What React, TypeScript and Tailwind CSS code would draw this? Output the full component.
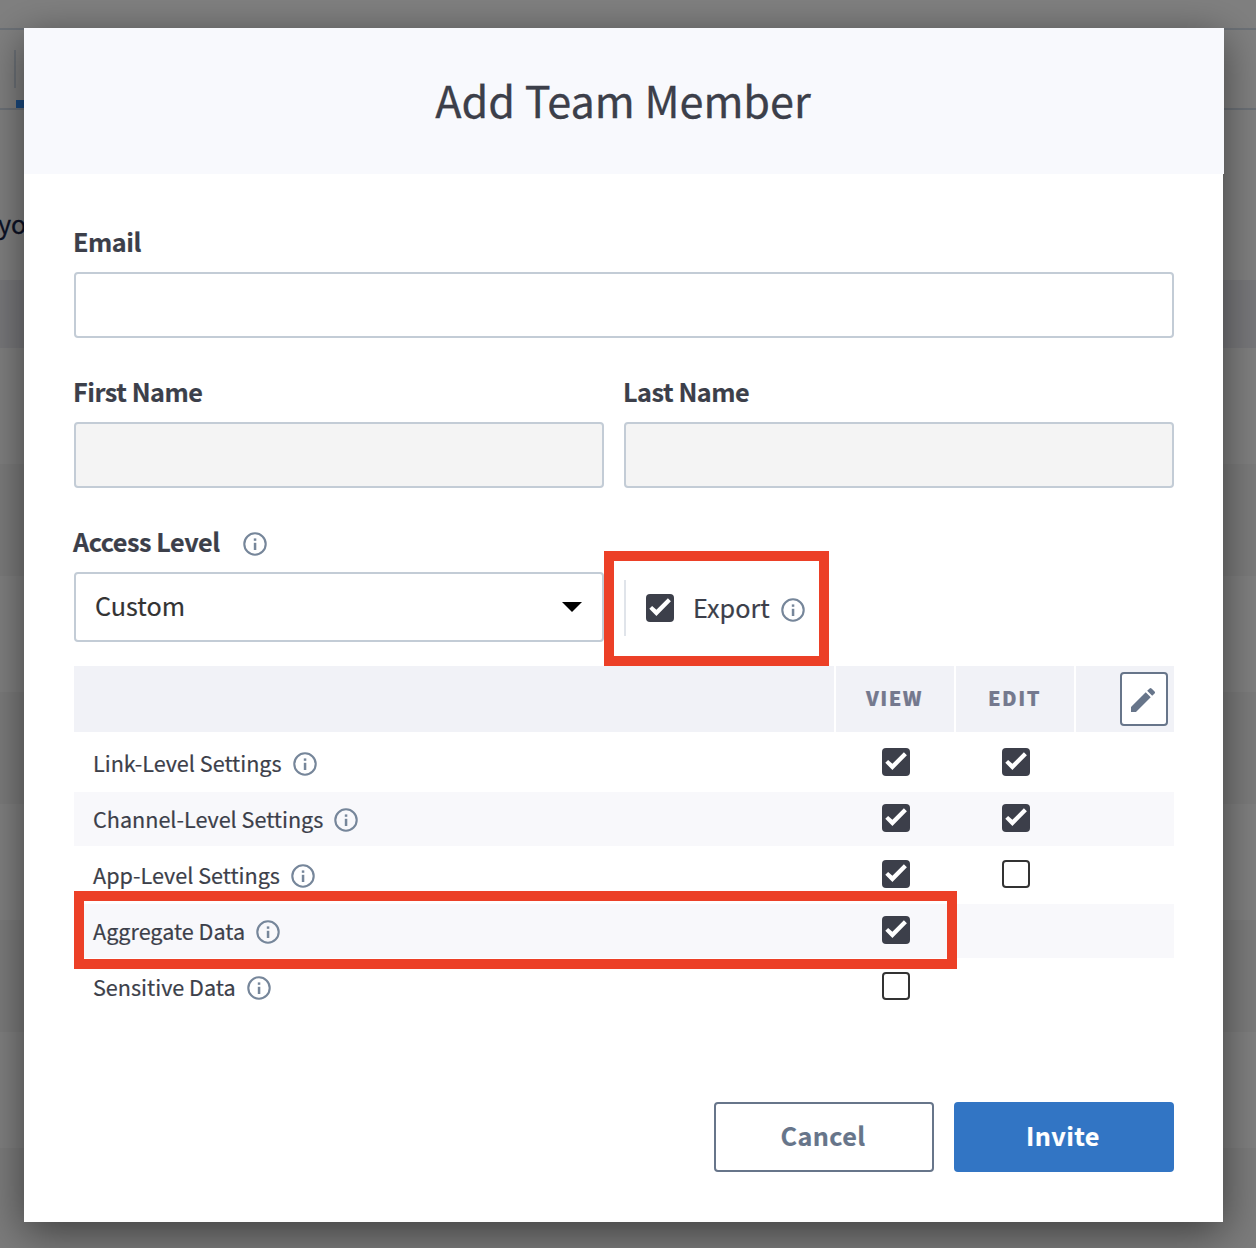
import { MdEdit } from "react-icons/md";
import type { ReactNode } from "react";

function Info({ className = "" }: { className?: string }) {
  return (
    <svg viewBox="0 0 24 24" className={`h-6 w-6 shrink-0 text-[#76869a] ${className}`} fill="none">
      <circle cx="12" cy="12" r="10.7" stroke="currentColor" strokeWidth="2.1" />
      <rect x="10.8" y="6.4" width="2.5" height="2.4" fill="currentColor" />
      <rect x="10.8" y="10.8" width="2.5" height="7.2" fill="currentColor" />
    </svg>
  );
}

function Check({ on }: { on: boolean }) {
  return on ? (
    <span className="block h-7 w-7 shrink-0 rounded bg-[#3c3f4a]">
      <svg viewBox="0 0 28 28" className="h-7 w-7">
        <path d="M3.3 14.7 6.1 11.9 10.4 15.8 21.9 4.3 24.9 7.2 10.4 22Z" fill="#fff" />
      </svg>
    </span>
  ) : (
    <span className="block h-7 w-7 shrink-0 rounded border-2 border-[#333] bg-white" />
  );
}

function Label({ children, className = "" }: { children: ReactNode; className?: string }) {
  return (
    <div className={`-ml-px h-[30px] text-[25.2px] leading-[30px] font-bold tracking-[-0.45px] whitespace-nowrap ${className}`}>
      {children}
    </div>
  );
}

const rows = [
  { name: "Link-Level Settings", view: true, edit: true },
  { name: "Channel-Level Settings", view: true, edit: true },
  { name: "App-Level Settings", view: true, edit: false },
  { name: "Aggregate Data", view: true, edit: null },
  { name: "Sensitive Data", view: false, edit: null },
];

function Backdrop() {
  return (
    <div className="absolute inset-0 flex flex-col overflow-hidden">
      <div className="h-7 shrink-0" />
      <div className="flex h-[82px] shrink-0 border-y-2 border-[#6c7177]">
        <div className="mt-5 ml-3.5 h-[38px] w-0.5 bg-[#6c7177]" />
        <div className="mt-[70px] h-2 w-[120px] bg-[#1a4a80]" />
      </div>
      <div className="h-[170px] shrink-0 pt-[98px] text-[25.2px] leading-[30px] text-[#0c1226]">
        <span className="-ml-0.5">yo</span>
      </div>
      <div className="h-[68px] shrink-0 bg-[#78787b]" />
      <div className="h-[116px] shrink-0" />
      <div className="h-[112px] shrink-0 bg-[#7c7c7c]" />
      <div className="h-[116px] shrink-0" />
      <div className="h-[112px] shrink-0 bg-[#7c7c7c]" />
      <div className="h-[116px] shrink-0" />
      <div className="h-[112px] shrink-0 bg-[#7c7c7c]" />
      <div className="h-[116px] shrink-0" />
      <div className="h-[100px] shrink-0 bg-[#7c7c7c]" />
    </div>
  );
}

export default function App() {
  return (
    <div className="relative h-[1248px] w-[1256px] overflow-hidden bg-[#808080] pt-7 pl-6 font-['Noto_Sans_CJK_SC',sans-serif] text-[#3c3f4a] [-webkit-text-stroke:0.3px_currentColor]">
      <Backdrop />
      <div className="relative h-[1194px] w-[1199px] bg-white shadow-[0_10px_40px_rgba(0,0,0,0.5)]">
        <div className="flex h-[146px] w-[1200px] items-center justify-center bg-[#f8f9fd] pr-0.5 pb-1">
          <h1 className="text-[43.2px] leading-[60px] tracking-[-0.03px] whitespace-nowrap">Add Team Member</h1>
        </div>
        <div className="px-[50px] [-webkit-text-stroke:0.2px_currentColor]">
          <Label className="mt-[52px]">Email</Label>
          <div className="mt-4 h-[66px] w-[1100px] rounded border-2 border-[#c3ccd6]" />
          <div className="mt-[38px] flex w-[1100px] gap-5">
            <div className="w-[530px]">
              <Label>First Name</Label>
              <div className="mt-4 h-[66px] rounded border-2 border-[#c3ccd6] bg-[#f4f4f4]" />
            </div>
            <div className="w-[550px]">
              <Label>Last Name</Label>
              <div className="mt-4 h-[66px] rounded border-2 border-[#c3ccd6] bg-[#f4f4f4]" />
            </div>
          </div>
          <div className="mt-[38px] flex h-[30px] items-center">
            <Label className="w-[169.5px]">Access Level</Label>
            <Info className="mt-1.5" />
          </div>
          <div className="mt-4 flex h-[70px] w-[1100px]">
            <div className="flex w-[530px] items-center justify-between rounded border-2 border-[#c3ccd6] px-[19px] pr-5 text-[25.2px] leading-[30px] text-[#333]">
              <span className="pb-1">Custom</span>
              <svg viewBox="0 0 20 10" className="h-2.5 w-5">
                <path d="M0 0H20L10 10Z" fill="#000" />
              </svg>
            </div>
            <div className="mt-2 ml-5 flex h-14 items-center border-l-2 border-[#e0e4ea] pl-5">
              <Check on />
              <span className="ml-[19px] w-[88px] pb-0.5 text-[25.2px] leading-[30px]">Export</span>
              <Info className="mt-1" />
            </div>
          </div>
          <div className="mt-6 flex h-[66px] w-[1100px] gap-0.5 text-[20px] leading-[30px] font-black text-[#74798e]">
            <div className="w-[760px] bg-[#f1f2f7]" />
            <div className="flex w-[118px] items-center justify-center bg-[#f1f2f7] pr-px pb-0.5 tracking-[1.5px]">VIEW</div>
            <div className="flex w-[118px] items-center justify-center bg-[#f1f2f7] pr-px pb-0.5 tracking-[1.5px]">EDIT</div>
            <div className="flex w-[98px] items-center justify-end bg-[#f1f2f7] pr-1.5">
              <div className="flex h-[54px] w-12 items-center justify-center rounded border-2 border-[#67758a] bg-white pt-0.5 pr-0.5 text-[#67758a]">
                <MdEdit size={32} className="shrink-0" strokeWidth={0} />
              </div>
            </div>
          </div>
          <div className="mt-0.5 w-[1100px]">
            {rows.map((r, i) => (
              <div key={r.name} className={`flex h-14 border-t-2 border-white ${i % 2 ? "bg-[#f8f8fb]" : ""}`}>
                <div className="flex w-[808px] items-center gap-[11px] pl-[19px] text-[21.6px] leading-[30px]">
                  <span>{r.name}</span>
                  <Info className="mt-0.5" />
                </div>
                <div className="w-[120px] pt-3">
                  <Check on={r.view} />
                </div>
                <div className="pt-3">{r.edit !== null && <Check on={r.edit} />}</div>
              </div>
            ))}
          </div>
          <div className="mt-[88px] flex w-[1100px] justify-end gap-5 text-[25.2px] leading-[30px] font-bold">
            <div className="flex h-[70px] w-[220px] items-center justify-center rounded border-2 border-[#67758a] pr-0.5 pb-1 tracking-[0.4px] text-[#67758a]">Cancel</div>
            <div className="flex h-[70px] w-[220px] items-center justify-center rounded bg-[#3275c4] pr-0.5 pb-1 tracking-[0.4px] text-white">Invite</div>
          </div>
        </div>
        <div className="absolute top-[523px] left-[580px] h-[115px] w-[225px] border-10 border-[#ec4027]" />
        <div className="absolute top-[863px] left-[50px] h-[78px] w-[883px] border-10 border-[#ec4027]" />
      </div>
    </div>
  );
}
